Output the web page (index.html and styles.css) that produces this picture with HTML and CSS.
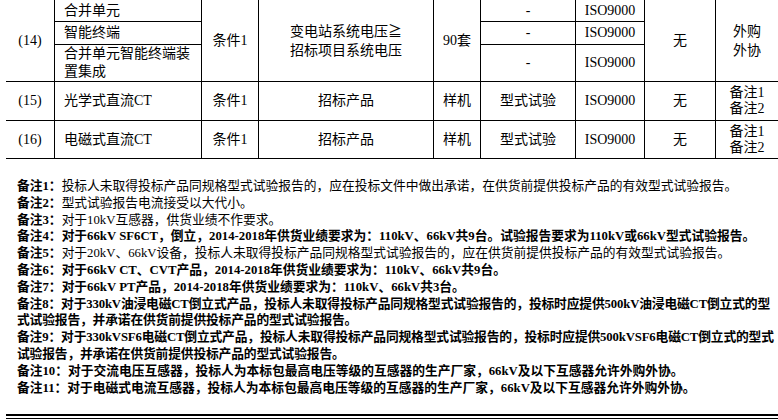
FILE: index.html
```html
<!DOCTYPE html>
<html lang="zh-CN">
<head>
<meta charset="utf-8">
<title>招标要求</title>
<link rel="stylesheet" href="styles.css">
</head>
<body>
<div class="spec">
  <div class="c r3"><span>(14)</span></div>
  <div class="c name"><span>合并单元</span></div>
  <div class="c r3"><span>条件1</span></div>
  <div class="c r3 tall"><span>变电站系统电压≧<br>招标项目系统电压</span></div>
  <div class="c r3"><span>90套</span></div>
  <div class="c"><span>-</span></div>
  <div class="c"><span>ISO9000</span></div>
  <div class="c r3"><span>无</span></div>
  <div class="c r3 last tall"><span>外购<br>外协</span></div>

  <div class="c name"><span>智能终端</span></div>
  <div class="c"><span>-</span></div>
  <div class="c"><span>ISO9000</span></div>

  <div class="c name"><span>合并单元智能终端装置集成</span></div>
  <div class="c"><span>-</span></div>
  <div class="c"><span>ISO9000</span></div>

  <div class="c"><span>(15)</span></div>
  <div class="c name"><span>光学式直流CT</span></div>
  <div class="c"><span>条件1</span></div>
  <div class="c"><span>招标产品</span></div>
  <div class="c"><span>样机</span></div>
  <div class="c"><span>型式试验</span></div>
  <div class="c"><span>ISO9000</span></div>
  <div class="c"><span>无</span></div>
  <div class="c last remark"><span>备注1<br>备注2</span></div>

  <div class="c"><span>(16)</span></div>
  <div class="c name"><span>电磁式直流CT</span></div>
  <div class="c"><span>条件1</span></div>
  <div class="c"><span>招标产品</span></div>
  <div class="c"><span>样机</span></div>
  <div class="c"><span>型式试验</span></div>
  <div class="c"><span>ISO9000</span></div>
  <div class="c"><span>无</span></div>
  <div class="c last remark"><span>备注1<br>备注2</span></div>
</div>

<div class="notes">
  <p><b>备注1：</b>投标人未取得投标产品同规格型式试验报告的，应在投标文件中做出承诺，在供货前提供投标产品的有效型式试验报告。</p>
  <p><b>备注2：</b>型式试验报告电流接受以大代小。</p>
  <p><b>备注3：</b>对于10kV互感器，供货业绩不作要求。</p>
  <p class="strong"><b>备注4：</b>对于66kV SF6CT，倒立，2014-2018年供货业绩要求为：110kV、66kV共9台。试验报告要求为110kV或66kV型式试验报告。</p>
  <p><b>备注5：</b>对于20kV、66kV设备，投标人未取得投标产品同规格型式试验报告的，应在供货前提供投标产品的有效型式试验报告。</p>
  <p class="strong"><b>备注6：</b>对于66kV CT、CVT产品，2014-2018年供货业绩要求为：110kV、66kV共9台。</p>
  <p class="strong"><b>备注7：</b>对于66kV PT产品，2014-2018年供货业绩要求为：110kV、66kV共3台。</p>
  <p class="strong tight"><b>备注8：</b>对于330kV油浸电磁CT倒立式产品，投标人未取得投标产品同规格型式试验报告的，投标时应提供500kV油浸电磁CT倒立式的型<br>式试验报告，并承诺在供货前提供投标产品的型式试验报告。</p>
  <p class="strong tight"><b>备注9：</b>对于330kVSF6电磁CT倒立式产品，投标人未取得投标产品同规格型式试验报告的，投标时应提供500kVSF6电磁CT倒立式的型式<br>试验报告，并承诺在供货前提供投标产品的型式试验报告。</p>
  <p class="strong"><b>备注10：</b>对于交流电压互感器，投标人为本标包最高电压等级的互感器的生产厂家，66kV及以下互感器允许外购外协。</p>
  <p class="strong"><b>备注11：</b>对于电磁式电流互感器，投标人为本标包最高电压等级的互感器的生产厂家，66kV及以下互感器允许外购外协。</p>
</div>

<div class="rule"></div>
</body>
</html>
```

FILE: styles.css
```css
html, body {
  margin: 0;
  padding: 0;
  background: #fff;
  color: #000;
  overflow: hidden;
}

body {
  font-family: "Liberation Serif", "Noto Sans CJK SC", serif;
}

.spec {
  display: grid;
  margin-left: 6px;
  width: 772px;
  grid-template-columns: 49px 147px 57px 175px 47px 95px 69px 71px 62px;
  grid-template-rows: 22px 23px 37px 39px 38px;
  font-size: 14px;
  line-height: 18px;
}

.c {
  box-sizing: border-box;
  border-right: 1px solid #000;
  border-bottom: 1px solid #000;
  display: flex;
  align-items: center;
  justify-content: center;
  text-align: center;
  overflow: hidden;
}

.c span {
  display: block;
}

.name {
  justify-content: flex-start;
  text-align: left;
  padding: 0 9px;
}

.r3 {
  grid-row: span 3;
}

.tall {
  line-height: 19px;
}

.remark {
  line-height: 16px;
}

.last {
  border-right: none;
}

.notes {
  margin-top: 19px;
  padding-left: 17px;
  font-size: 12.75px;
  line-height: 16.8px;
  white-space: nowrap;
  overflow: hidden;
}

.notes p {
  margin: 0;
}

.notes b,
.notes .strong {
  font-weight: 700;
}

.notes .tight {
  letter-spacing: -0.15px;
}

.rule {
  margin: 18px 0 0 6px;
  height: 2px;
  border-top: 2px solid #000;
  border-bottom: 1px solid #000;
}
```
